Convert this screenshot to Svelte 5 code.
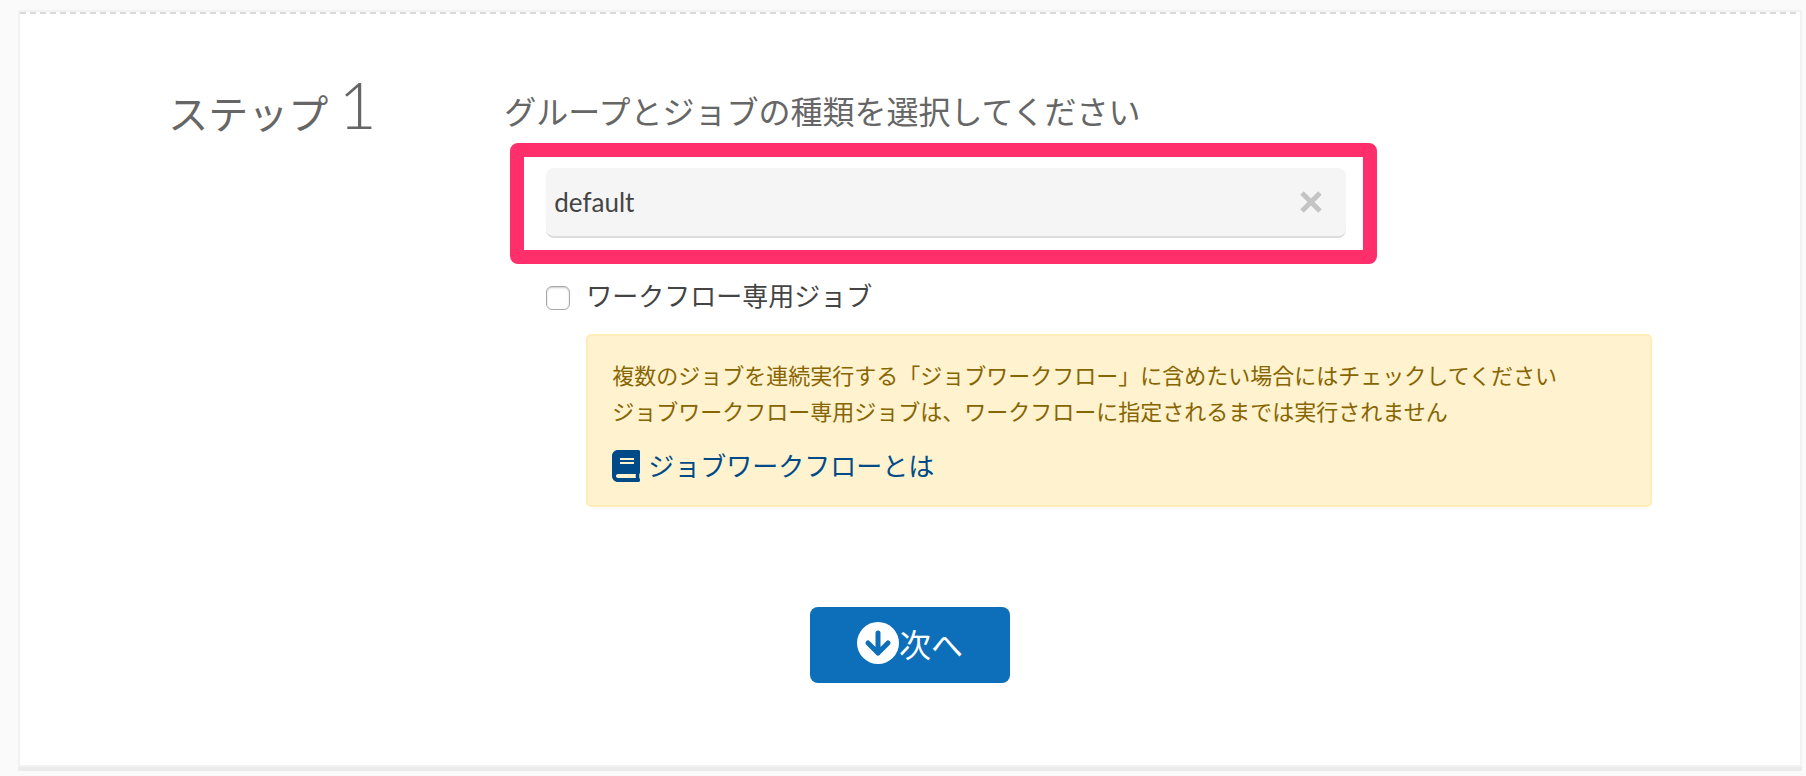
<script lang="ts">
	let group: string = $state('default');
	let workflowOnly: boolean = $state(false);

	function clearGroup(): void {
		group = '';
	}
</script>

<main class="card">
	<form class="step" onsubmit={(e) => e.preventDefault()}>
		<h1 class="step-title">ステップ <span class="step-number">1</span></h1>

		<div class="step-body">
			<h2 class="heading"><label for="group">グループとジョブの種類を選択してください</label></h2>

			<div class="highlight">
				<div class="group-field">
					<input id="group" class="group-input" type="text" bind:value={group} />
					<button class="clear" type="button" aria-label="クリア" onclick={clearGroup}>
						<svg viewBox="0 0 22 22" width="22" height="22">
							<path d="M2 2L20 20M20 2L2 20" />
						</svg>
					</button>
				</div>
			</div>

			<div class="options">
				<input id="workflow-only" class="check" type="checkbox" bind:checked={workflowOnly} />
				<label class="check-label" for="workflow-only">ワークフロー専用ジョブ</label>

				<div class="notice">
					<p>
						複数のジョブを連続実行する「ジョブワークフロー」に含めたい場合にはチェックしてください<br />
						ジョブワークフロー専用ジョブは、ワークフローに指定されるまでは実行されません
					</p>
					<a class="help" href="#workflow">
						<svg viewBox="0 0 448 512" width="28" height="32">
							<path d="M448 360V24c0-13.3-10.7-24-24-24H96C43 0 0 43 0 96v320c0 53 43 96 96 96h328c13.3 0 24-10.7 24-24v-16c0-7.5-3.5-14.3-8.9-18.7-4.2-15.4-4.2-59.3 0-74.7 5.4-4.3 8.9-11.1 8.9-18.6zM128 134c0-3.3 2.7-6 6-6h212c3.3 0 6 2.7 6 6v20c0 3.3-2.7 6-6 6H134c-3.3 0-6-2.7-6-6v-20zm0 64c0-3.3 2.7-6 6-6h212c3.3 0 6 2.7 6 6v20c0 3.3-2.7 6-6 6H134c-3.3 0-6-2.7-6-6v-20zm253.4 250H96c-17.7 0-32-14.3-32-32 0-17.6 14.4-32 32-32h285.4c-1.9 17.1-1.9 46.9 0 64z" />
						</svg>
						<span>ジョブワークフローとは</span>
					</a>
				</div>
			</div>
		</div>

		<button class="next" type="submit">
			<svg viewBox="0 0 42 42" width="42" height="42">
				<circle cx="21" cy="21" r="21" />
				<path d="M21 11V31M11 21L21 31L31 21" />
			</svg>
			<span>次へ</span>
		</button>
	</form>
</main>

<style>
	:global(body) {
		margin: 0;
		background: #fafafa;
		color: #444;
		font-family: Lato, 'Noto Sans CJK JP', sans-serif;
	}

	.card {
		margin: 10px 4px 10px 18px;
		border: 2px solid #f2f2f2;
		box-shadow: 0 4px 0 #ebebeb;
		background: #fff;
	}

	/* dashed separator along the top of the card */
	.card::before {
		content: '';
		display: block;
		height: 2px;
		background: repeating-linear-gradient(to right, #d9d9d9 0 6px, #fff 6px 10px);
	}

	.step {
		display: grid;
		grid-template-columns: 336px 1fr;
		padding: 60px 8.333% 82px;
	}

	.step-title,
	.heading {
		margin: 0;
		font-weight: 400;
		color: #666;
	}

	.step-title {
		font-size: 40px;
		line-height: 60px;
	}

	.step-number {
		font-size: 66px;
		font-weight: 300;
	}

	.heading {
		padding-top: 12px;
		font-size: 32px;
		line-height: 52px;
	}

	.highlight {
		box-sizing: border-box;
		width: 867px;
		max-width: 100%;
		margin: 5px 0 0 6px;
		padding: 11px 17px 12px 22px;
		border: 14px solid #ff2f6c;
		border-radius: 8px;
	}

	.group-field {
		display: flex;
		align-items: center;
		height: 68px;
		padding-right: 20px;
		border-bottom: 2px solid #dcdcdc;
		border-radius: 8px;
		background: #f5f5f5;
	}

	.group-input {
		flex: 1;
		min-width: 0;
		padding: 0 8px;
		border: 0;
		background: none;
		color: #444;
		font: inherit;
		font-size: 26px;
	}

	.clear {
		display: flex;
		padding: 4px;
		border: 0;
		background: none;
		cursor: pointer;
	}

	.clear path {
		fill: none;
		stroke: #c4c4c4;
		stroke-width: 5;
	}

	.options {
		display: grid;
		grid-template-columns: 24px 1fr;
		column-gap: 16px;
		align-items: center;
		margin: 12px 0 0 42px;
	}

	.check {
		appearance: none;
		width: 24px;
		height: 24px;
		margin: 0;
		border: 1px solid #a8a8a8;
		border-radius: 6px;
		background: #fff;
		box-shadow: inset 0 1px 2px #ccc;
	}

	.check:checked {
		background: #0d6eb9;
	}

	.check-label {
		padding-bottom: 4px;
		font-size: 26px;
		line-height: 40px;
	}

	.notice {
		grid-column: 2;
		margin-top: 14px;
		padding: 22px 24px 20px;
		border: 2px solid #ffedb8;
		border-radius: 5px;
		background: #fff2cf;
		color: #876500;
	}

	.notice p {
		margin: 0 0 18px;
		font-size: 22px;
		line-height: 36px;
	}

	.help {
		display: inline-flex;
		align-items: center;
		gap: 8px;
		color: #004b87;
		font-size: 26px;
		line-height: 36px;
		text-decoration: none;
	}

	.help svg {
		fill: currentColor;
	}

	.next {
		grid-column: 1 / -1;
		justify-self: center;
		display: flex;
		align-items: center;
		justify-content: center;
		width: 200px;
		height: 76px;
		margin-top: 100px;
		padding: 0 0 4px;
		border: 0;
		border-radius: 8px;
		background: #0d6eb9;
		color: #fff;
		font: inherit;
		font-size: 32px;
		cursor: pointer;
	}

	.next circle {
		fill: #fff;
	}

	.next path {
		fill: none;
		stroke: #0d6eb9;
		stroke-width: 5;
		stroke-linecap: round;
		stroke-linejoin: round;
	}
</style>
